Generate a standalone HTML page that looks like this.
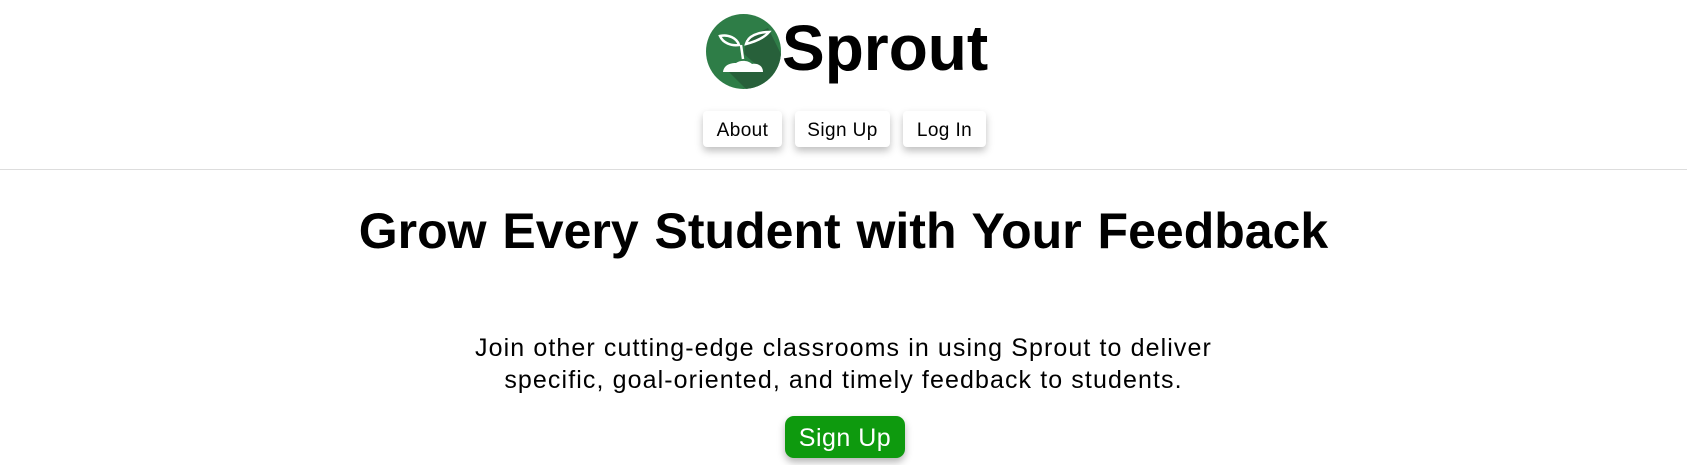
<!DOCTYPE html>
<html><head><style>
html,body{margin:0;padding:0;background:#fff;width:1687px;height:465px;overflow:hidden;font-family:"Liberation Sans",sans-serif;color:#000}
.logo{position:absolute;left:706px;top:14px;width:75px;height:75px}
.brand{position:absolute;left:782px;top:11px;font-size:64px;font-weight:bold;letter-spacing:0px}
.nav a{position:absolute;top:111px;height:36px;line-height:39px;background:#fff;border-radius:4px;box-shadow:0 4px 8px rgba(0,0,0,.25);font-size:19px;letter-spacing:0.4px;text-align:center;color:#000}
hr{position:absolute;top:169px;left:0;width:1687px;margin:0;border:0;border-top:1px solid #ddd}
h1{position:absolute;top:202px;left:0;width:1687px;text-align:center;margin:0;font-size:50px;font-weight:bold;word-spacing:2px}
p{position:absolute;top:332px;left:0;width:1687px;text-align:center;margin:0;font-size:25px;letter-spacing:1.1px;line-height:32px}
.cta{position:absolute;left:785px;top:416px;width:120px;height:42px;line-height:44px;background:#0e9a0e;color:#fff;border-radius:9px;text-align:center;font-size:25px;letter-spacing:0.5px;box-shadow:0 4px 8px rgba(0,0,0,.3)}
</style></head><body>
<svg class="logo" viewBox="0 0 75 75">
<defs><clipPath id="c"><circle cx="37.5" cy="37.5" r="37.5"/></clipPath></defs>
<circle cx="37.5" cy="37.5" r="37.5" fill="#2e7d47"/>
<polygon clip-path="url(#c)" points="40,25 62,14 75,40 75,75 40,75 20,55 55,55 38,40" fill="#27603a"/>
<g fill="none" stroke="#fff" stroke-width="2.5">
<path d="M14 22 C22 20 31 24 33 31 C25 32 17 29 14 22Z"/>
<path d="M63 18 C58 24 48 28 40 30 C42 22 52 18 63 18Z"/>
<path d="M35 31 L37 45"/>
</g>
<path d="M17 58 C18 50 26 49 30 49 C34 46 42 46 46 50 C52 49 57 52 57 58Z" fill="#fff"/>
</svg>
<div class="brand">Sprout</div>
<div class="nav">
<a style="left:703px;width:79px">About</a>
<a style="left:795px;width:95px">Sign Up</a>
<a style="left:903px;width:83px">Log In</a>
</div>
<hr>
<h1>Grow Every Student with Your Feedback</h1>
<p>Join other cutting-edge classrooms in using Sprout to deliver<br>specific, goal-oriented, and timely feedback to students.</p>
<div class="cta">Sign Up</div>
</body></html>
